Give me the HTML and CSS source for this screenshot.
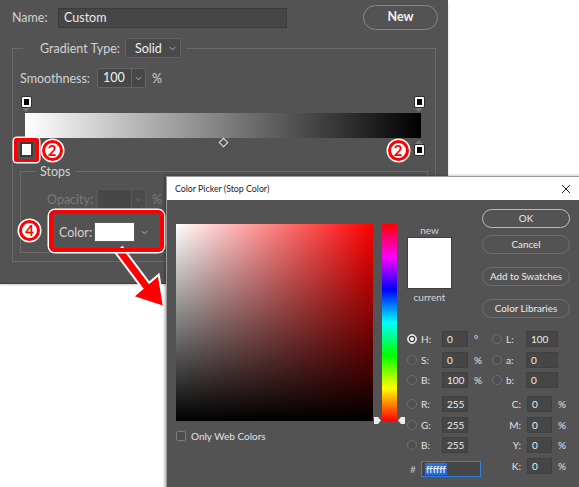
FILE: index.html
```html
<!DOCTYPE html>
<html>
<head>
<meta charset="utf-8">
<link rel="stylesheet" href="styles.css">
</head>
<body>
<div class="stage">
  <div class="gdlg">
    <div class="namerow">
      <span class="lbl-name">Name:</span>
      <div class="namefield">Custom</div>
      <div class="newbtn">New</div>
    </div>
    <fieldset class="fs-outer">
      <legend class="lg-outer"><span class="lg-inner"><span>Gradient Type:</span><span class="dd">Solid<svg class="chev dd-chev" viewBox="0 0 8 5"><polyline points="1,1 4,4 7,1"/></svg></span></span></legend>
      <div class="frow smooth">
        <span class="flbl">Smoothness:</span>
        <span class="numsel"><span class="numval">100</span><span class="numbtn"><svg class="chev" viewBox="0 0 8 5"><polyline points="1,1 4,4 7,1"/></svg></span></span>
        <span class="unit">%</span>
      </div>
      <div class="grad">
        <div class="bar"></div>
        <span class="ostop ostop-l"></span>
        <span class="tri-down tri-l"></span>
        <span class="ostop ostop-r"></span>
        <span class="tri-down tri-r"></span>
        <span class="cstop-sel"></span>
        <span class="mid"></span>
        <span class="tri-up tri-cr"></span>
        <span class="cstop"></span>
      </div>
      <fieldset class="fs-stops">
        <legend class="lg-stops">Stops</legend>
        <div class="frow opac">
          <span class="flbl dis">Opacity:</span>
          <span class="numsel dis"><span class="numval"></span><span class="numbtn"><svg class="chev" viewBox="0 0 8 5"><polyline points="1,1 4,4 7,1"/></svg></span></span>
          <span class="unit dis">%</span>
        </div>
        <div class="frow colr">
          <span class="flbl">Color:</span>
          <span class="swatch"></span>
          <svg class="chev colr-chev" viewBox="0 0 8 5"><polyline points="1,1 4,4 7,1"/></svg>
        </div>
      </fieldset>
    </fieldset>
  </div>

  <svg class="arrow" width="579" height="487" viewBox="0 0 579 487">
    <polygon points="122.4,247.1 149.2,282.8 158.7,274.7 164,307 132.9,296.7 142.4,288.6 115.6,252.9"/>
  </svg>
  <div class="hl hl-stop"></div>
  <div class="badge b-left">2</div>
  <div class="badge b-right">2</div>
  <div class="hl hl-color"></div>
  <div class="badge b-four">4</div>

  <div class="picker">
    <div class="ptitle">
      <span>Color Picker (Stop Color)</span>
      <svg class="pclose" viewBox="0 0 10 10"><path d="M1 1L9 9M9 1L1 9"/></svg>
    </div>
    <div class="pbody">
      <div class="pleft">
        <div class="fieldrow">
          <div class="field"><span class="fmark"></span></div>
          <div class="hue">
            <svg class="htri htri-l" viewBox="0 0 7 7"><polygon points="0,0 4,0 7,3.5 4,7 0,7"/></svg>
            <svg class="htri htri-r" viewBox="0 0 7 7"><polygon points="7,0 3,0 0,3.5 3,7 7,7"/></svg>
          </div>
        </div>
        <div class="webrow"><span class="cbox"></span><span>Only Web Colors</span></div>
      </div>
      <div class="pright">
        <div class="ptop">
          <div class="swcol">
            <span class="swlbl">new</span>
            <span class="swatch2"></span>
            <span class="swlbl cur">current</span>
          </div>
          <div class="btncol">
            <div class="pbtn ok">OK</div>
            <div class="pbtn cancel">Cancel</div>
            <div class="pbtn add">Add to Swatches</div>
            <div class="pbtn lib">Color Libraries</div>
          </div>
        </div>
        <div class="vals">
          <div class="hsb">
            <div class="vrow"><span class="radio on"></span><span class="vl">H:</span><span class="vin">0</span><span class="vu">°</span><span class="radio r2"></span><span class="vl vl2">L:</span><span class="vin vin2">100</span></div>
            <div class="vrow"><span class="radio"></span><span class="vl">S:</span><span class="vin">0</span><span class="vu">%</span><span class="radio r2"></span><span class="vl vl2">a:</span><span class="vin vin2">0</span></div>
            <div class="vrow"><span class="radio"></span><span class="vl">B:</span><span class="vin">100</span><span class="vu">%</span><span class="radio r2"></span><span class="vl vl2">b:</span><span class="vin vin2">0</span></div>
          </div>
          <div class="rgbc">
            <div class="rgbcol">
              <div class="vrow"><span class="radio"></span><span class="vl">R:</span><span class="vin">255</span></div>
              <div class="vrow"><span class="radio"></span><span class="vl">G:</span><span class="vin">255</span></div>
              <div class="vrow"><span class="radio"></span><span class="vl">B:</span><span class="vin">255</span></div>
              <div class="vrow hexrow"><span class="hexl">#</span><span class="hexin"><span class="sel">ffffff</span></span></div>
            </div>
            <div class="cmyk">
              <div class="vrow"><span class="cl">C:</span><span class="vin cin">0</span><span class="cu">%</span></div>
              <div class="vrow"><span class="cl">M:</span><span class="vin cin">0</span><span class="cu">%</span></div>
              <div class="vrow"><span class="cl">Y:</span><span class="vin cin">0</span><span class="cu">%</span></div>
              <div class="vrow"><span class="cl">K:</span><span class="vin cin">0</span><span class="cu">%</span></div>
            </div>
          </div>
        </div>
      </div>
    </div>
  </div>
</div>
</body>
</html>
```
FILE: styles.css
```css
html, body { margin: 0; padding: 0; background: #fff; }
body { width: 579px; height: 487px; overflow: hidden; }
.stage {
  position: relative; width: 579px; height: 487px; overflow: hidden;
  font-family: Lato, "Liberation Sans", sans-serif; font-size: 12.5px; color: #d2d2d2;
}

/* ---------- gradient editor ---------- */
.gdlg {
  width: 448px; height: 283px; box-sizing: border-box;
  background: #535353; padding: 5px 10px 0 12px;
  box-shadow: 0 1px 0 #3e3e3e, 0 2px 2px rgba(0,0,0,.2);
}
.namerow { display: flex; align-items: center; height: 25px; }
.lbl-name { width: 46px; }
.namefield {
  width: 229px; height: 20px; box-sizing: border-box;
  background: #464646; border: 1px solid #3b3b3b;
  padding-left: 5px; line-height: 18px; color: #ececec;
}
.newbtn {
  margin-left: auto; width: 75px; height: 25px; box-sizing: border-box;
  border: 1.5px solid #888; border-radius: 13px;
  text-align: center; line-height: 22px; color: #f2f2f2; font-weight: 700;
}
fieldset { min-width: 0; margin: 0; }
.fs-outer {
  margin-top: 8px; width: 424px; box-sizing: border-box;
  padding: 0 7px 8px 7px; border: 1px solid #6a6a6a;
}
.lg-outer { margin-left: 3px; padding: 0 5px 0 17px; }
.lg-inner { display: flex; align-items: center; height: 20px; }
.dd {
  display: flex; align-items: center; margin-left: 5px;
  width: 56px; height: 20px; box-sizing: border-box;
  background: #4a4a4a; border: 1px solid #616161; border-radius: 2px;
  padding-left: 9px; color: #f0f0f0;
}
.chev { width: 7px; height: 5px; fill: none; stroke: #b8b8b8; stroke-width: 1.1; }
.dd-chev { margin-left: auto; margin-right: 4px; }
.frow { display: flex; align-items: center; height: 20px; }
.smooth { margin-top: 10px; }
.smooth .flbl { width: 77px; }
.numsel {
  display: flex; width: 49px; height: 20px; box-sizing: border-box;
  border: 1px solid #646464; background: #474747; border-radius: 2px;
}
.numval {
  width: 34px; box-sizing: border-box; border-right: 1px solid #646464;
  padding-left: 5px; line-height: 18px; color: #f0f0f0;
}
.numbtn { flex: 1; display: flex; align-items: center; justify-content: center; }
.unit { margin-left: 6px; }

.grad { display: flow-root; position: relative; height: 67px; margin-top: 7px; }
.bar {
  margin: 18px 0 0 5px; width: 396px; height: 25px;
  background: linear-gradient(to right, #fff, #000);
}
.ostop, .cstop {
  position: absolute; width: 9px; height: 10px; box-sizing: border-box;
  background: #000; border: 2px solid #fff; border-radius: 1px;
  box-shadow: 0 0 0 1px #2e2e2e;
}
.ostop-l { left: 2px; top: 2px; }
.ostop-r { left: 395px; top: 2px; }
.cstop { left: 395px; top: 50px; }
.tri-down, .tri-up { position: absolute; width: 0; height: 0; border-left: 4px solid transparent; border-right: 4px solid transparent; }
.tri-down { border-top: 4px solid #767676; top: 13px; }
.tri-l { left: 2px; }
.tri-r { left: 395px; }
.tri-up { border-bottom: 4px solid #767676; }
.tri-cr { left: 395px; top: 45px; }
.cstop-sel {
  position: absolute; left: 0; top: 47px; width: 13px; height: 15px; box-sizing: border-box;
  background: #fff; border: 2.5px solid #3a3a3a;
}
.mid {
  position: absolute; left: 200px; top: 44px; width: 5px; height: 5px;
  border: 1px solid #e6e6e6; transform: rotate(45deg);
}

.fs-stops {
  margin-top: 1px; width: 408px; box-sizing: border-box;
  padding: 0 0 10px 26px; border: 1px solid #6a6a6a;
}
.lg-stops { margin-left: -12px; padding: 0 5px; line-height: 17px; }
.opac { margin-top: 9px; }
.opac .flbl { width: 50px; }
.dis { color: #7a7a7a; }
.numsel.dis { border-color: #5a5a5a; background: #4b4b4b; }
.numsel.dis .numval { border-right-color: #5a5a5a; background: #474747; }
.numsel.dis .chev { stroke: #6e6e6e; }
.colr { margin-top: 13px; }
.colr .flbl { margin-left: 12px; width: 35px; }
.swatch {
  width: 41px; height: 20px; box-sizing: border-box;
  background: #fff; border: 1px solid #5c5c5c;
}
.colr-chev { margin-left: 6px; }

/* ---------- annotations ---------- */
.arrow { position: absolute; left: 0; top: 0; }
.arrow polygon { fill: #ff0000; stroke: #fff; stroke-width: 2; stroke-linejoin: miter; }
.hl { position: absolute; box-sizing: border-box; border: 3px solid #ff0000; box-shadow: 0 0 0 1.5px #fff; }
.hl-stop { left: 14px; top: 138px; width: 25px; height: 24px; border-radius: 3px; }
.hl-color { left: 49px; top: 210px; width: 115px; height: 42px; border-width: 4px; border-radius: 6px; }
.badge {
  position: absolute; width: 21px; height: 21px; box-sizing: border-box;
  border: 3px solid #ff0000; border-radius: 50%; background: #fff;
  box-shadow: 0 0 0 1.5px #fff;
  color: #ff0000; font-weight: 700; font-size: 15px; line-height: 15px; text-align: center;
}
.b-left { left: 41.5px; top: 139.5px; }
.b-right { left: 387.5px; top: 139.5px; }
.b-four { left: 19px; top: 219.5px; }

/* ---------- color picker ---------- */
.picker {
  position: absolute; left: 166px; top: 176px; width: 416px; height: 320px;
  box-sizing: border-box; border: 1px solid #9a9a9a; background: #535353;
  box-shadow: -1px 0 3px rgba(0,0,0,.35);
  font-size: 10px; color: #e2e2e2;
}
.ptitle {
  height: 23px; background: #fff; display: flex; align-items: center;
  padding: 0 10px 0 8px; font-size: 8.8px; color: #1c1c1c;
}
.pclose { margin-left: auto; width: 10px; height: 10px; fill: none; stroke: #222; stroke-width: 1; }
.pbody { display: flex; padding: 9px 0 0 9px; }
.pleft { margin-top: 15px; }
.fieldrow { display: flex; }
.field {
  position: relative; overflow: hidden; width: 197px; height: 197px;
  background: linear-gradient(to top, #000, rgba(0,0,0,0)), linear-gradient(to right, #fff, #f00);
}
.fmark {
  position: absolute; left: -3px; top: -3px; width: 7px; height: 7px; box-sizing: border-box;
  border: 1.5px solid #fff; border-radius: 50%;
}
.hue {
  position: relative; margin-left: 9px; width: 15px; height: 197px;
  background: linear-gradient(to bottom, #f00 0%, #f0f 16.67%, #00f 33.33%, #0ff 50%, #0f0 66.67%, #ff0 83.33%, #f00 100%);
}
.htri { position: absolute; top: 193px; width: 7px; height: 7px; fill: #ececec; }
.htri-l { left: -8px; }
.htri-r { left: 16px; }
.webrow { display: flex; align-items: center; margin-top: 10px; height: 10px; }
.cbox {
  width: 10px; height: 10px; box-sizing: border-box; margin-right: 5px;
  border: 1px solid #7a7a7a; border-radius: 2px; background: #4c4c4c;
}
.pright { margin-left: 8px; }
.ptop { display: flex; }
.swcol { margin: 15px 0 0 2px; width: 45px; display: flex; flex-direction: column; align-items: center; }
.swlbl { line-height: 13px; color: #d4d4d4; }
.swlbl.cur { line-height: 15px; margin-top: 1px; }
.swatch2 { width: 45px; height: 52px; box-sizing: border-box; background: #fff; border: 1px solid #3e3e3e; }
.btncol { margin-left: 30px; width: 88px; display: flex; flex-direction: column; }
.pbtn {
  height: 19px; box-sizing: border-box; border: 1px solid #6e6e6e; border-radius: 10px;
  text-align: center; line-height: 17px; color: #ececec; font-size: 9.8px;
}
.pbtn.ok { border: 1.5px solid #bcbcbc; line-height: 16px; }
.cancel { margin-top: 7px; }
.add, .lib { margin-top: 13px; }

.vals { margin-top: 13px; }
.hsb, .rgbcol, .cmyk { display: flex; flex-direction: column; gap: 4.5px; }
.vrow { display: flex; align-items: center; height: 16px; }
.radio {
  width: 10px; height: 10px; box-sizing: border-box; margin-left: 2px;
  border: 1px solid #6e6e6e; border-radius: 50%; background: #505050;
}
.radio.r2 { margin-left: 0; }
.radio.on {
  border: 1px solid #e4e4e4;
  background: radial-gradient(circle, #e4e4e4 0 1.8px, #3c3c3c 2.3px 3.1px, #e4e4e4 3.6px);
}
.vl { margin-left: 4px; width: 21px; }
.vl2 { width: 20px; }
.vin {
  width: 26px; height: 16px; box-sizing: border-box;
  background: #464646; border: 1px solid #404040;
  padding-left: 4px; line-height: 14px; color: #eeeeee;
}
.vin2 { width: 32px; }
.vu { margin-left: 6px; width: 18px; }
.rgbc { display: flex; margin-top: 8px; }
.rgbcol { width: 100px; }
.hexrow { margin-top: 3.5px; }
.hexl { margin-left: 5px; width: 11px; color: #bdbdbd; }
.hexin {
  width: 60px; height: 16px; box-sizing: border-box;
  background: #464646; border: 1px solid #2f80e6; padding: 1px 0 0 3px;
}
.sel { display: inline-block; background: #2c6fd6; color: #fff; line-height: 12px; padding: 0 1px; }
.cl { width: 16px; text-align: right; }
.cin { margin-left: 6px; width: 25px; }
.cu { margin-left: 6px; }
```
